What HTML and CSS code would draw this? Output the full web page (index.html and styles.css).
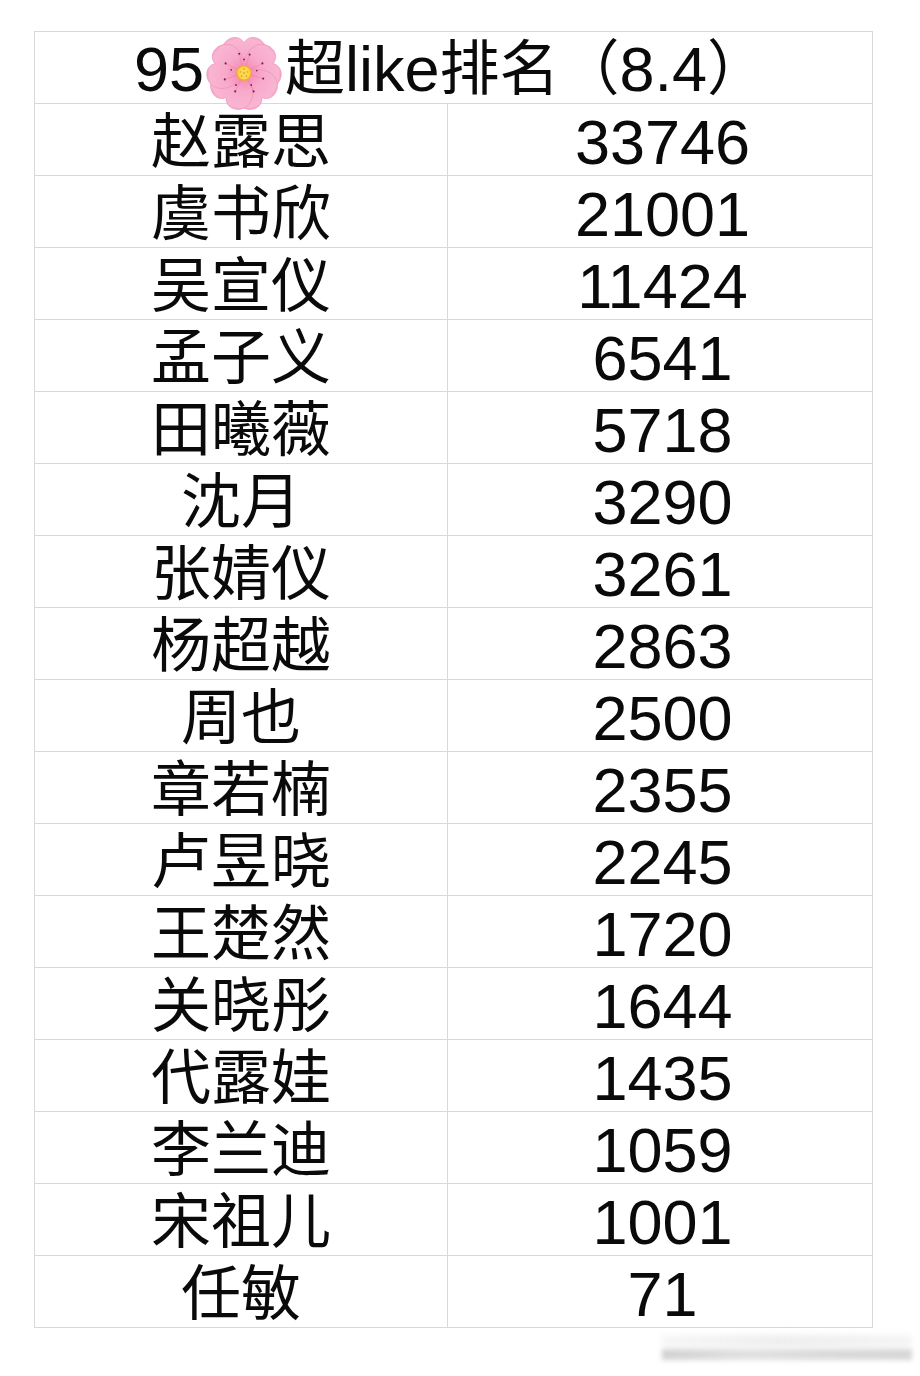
FILE: index.html
```html
<!DOCTYPE html>
<html lang="zh">
<head>
<meta charset="utf-8">
<title>95超like排名</title>
<link rel="stylesheet" href="styles.css">
</head>
<body>
<div class="sheet">
  <div class="grid">
    <div class="cell title"><span class="lat">95</span><svg class="blossom" viewBox="0 0 100 100" aria-hidden="true">
        <defs>
          <radialGradient id="pg" cx="50" cy="50" r="50" gradientUnits="userSpaceOnUse">
            <stop offset="0" stop-color="#f27fb0"/>
            <stop offset="0.45" stop-color="#f8a9ca"/>
            <stop offset="0.85" stop-color="#f9b5d2"/>
            <stop offset="1" stop-color="#f399c2"/>
          </radialGradient>
          <path id="petal" d="M50,51 C29,46 17,29 24,15 C30,4 44,2 50,12 C56,2 70,4 76,15 C83,29 71,46 50,51 Z"/>
        </defs>
        <g fill="url(#pg)" stroke="#ee8fbb" stroke-width="0.8">
          <use href="#petal"/>
          <use href="#petal" transform="rotate(72 50 50)"/>
          <use href="#petal" transform="rotate(144 50 50)"/>
          <use href="#petal" transform="rotate(216 50 50)"/>
          <use href="#petal" transform="rotate(288 50 50)"/>
        </g>
        <g stroke="#d9609a" stroke-width="0.7" opacity="0.5">
          <line x1="50" y1="50" x2="44" y2="26"/><line x1="50" y1="50" x2="57" y2="27"/>
          <line x1="50" y1="50" x2="73" y2="38"/><line x1="50" y1="50" x2="74" y2="57"/>
          <line x1="50" y1="50" x2="62" y2="73"/><line x1="50" y1="50" x2="39" y2="73"/>
          <line x1="50" y1="50" x2="26" y2="58"/><line x1="50" y1="50" x2="27" y2="38"/>
        </g>
        <g fill="#7d1d48">
          <circle cx="44" cy="26" r="1.3"/><circle cx="57" cy="27" r="1.3"/>
          <circle cx="73" cy="38" r="1.3"/><circle cx="74" cy="57" r="1.3"/>
          <circle cx="62" cy="73" r="1.3"/><circle cx="39" cy="73" r="1.3"/>
          <circle cx="26" cy="58" r="1.3"/><circle cx="27" cy="38" r="1.3"/>
          <circle cx="50" cy="33" r="1.1"/><circle cx="66" cy="47" r="1.1"/>
          <circle cx="59" cy="65" r="1.1"/><circle cx="40" cy="65" r="1.1"/>
          <circle cx="34" cy="46" r="1.1"/>
        </g>
        <circle cx="50" cy="50" r="10" fill="#f5a63c"/>
        <circle cx="50" cy="50" r="8" fill="#fbd94c"/>
        <g fill="#f39c2c">
          <circle cx="50" cy="45" r="1.1"/><circle cx="54.5" cy="48.5" r="1.1"/><circle cx="53" cy="54" r="1.1"/>
          <circle cx="47" cy="54" r="1.1"/><circle cx="45.5" cy="48.5" r="1.1"/><circle cx="50" cy="50" r="1.1"/>
        </g>
      </svg>超<span class="lat">like</span>排名（<span class="lat">8.4</span>）</div>

    <div class="cell name">赵露思</div><div class="cell num">33746</div>
    <div class="cell name">虞书欣</div><div class="cell num">21001</div>
    <div class="cell name">吴宣仪</div><div class="cell num">11424</div>
    <div class="cell name">孟子义</div><div class="cell num">6541</div>
    <div class="cell name">田曦薇</div><div class="cell num">5718</div>
    <div class="cell name">沈月</div><div class="cell num">3290</div>
    <div class="cell name">张婧仪</div><div class="cell num">3261</div>
    <div class="cell name">杨超越</div><div class="cell num">2863</div>
    <div class="cell name">周也</div><div class="cell num">2500</div>
    <div class="cell name">章若楠</div><div class="cell num">2355</div>
    <div class="cell name">卢昱晓</div><div class="cell num">2245</div>
    <div class="cell name">王楚然</div><div class="cell num">1720</div>
    <div class="cell name">关晓彤</div><div class="cell num">1644</div>
    <div class="cell name">代露娃</div><div class="cell num">1435</div>
    <div class="cell name">李兰迪</div><div class="cell num">1059</div>
    <div class="cell name">宋祖儿</div><div class="cell num">1001</div>
    <div class="cell name">任敏</div><div class="cell num">71</div>
  </div>
  <div class="footer">
    <div class="watermark">
      <div class="wm-top"></div>
      <div class="wm-band"></div>
    </div>
  </div>
</div>
</body>
</html>
```

FILE: styles.css
```css
html, body {
  margin: 0;
  padding: 0;
  background: #ffffff;
}

body {
  width: 920px;
  height: 1376px;
  overflow: hidden;
  font-family: "Liberation Sans", "Noto Sans CJK SC", sans-serif;
  color: #0a0a0a;
}

.sheet {
  padding: 31px 0 0 34px;
}

.grid {
  display: grid;
  grid-template-columns: 413px 425px;
  width: 838px;
  border-top: 1px solid #d8d8d8;
  border-left: 1px solid #d8d8d8;
}

.cell {
  height: 72px;
  box-sizing: border-box;
  border-right: 1px solid #d8d8d8;
  border-bottom: 1px solid #d8d8d8;
  display: flex;
  align-items: center;
  justify-content: center;
  white-space: nowrap;
  line-height: 1;
}

.title {
  grid-column: 1 / span 2;
  font-size: 60px;
  padding-top: 4px;
  padding-right: 6px;
}

.title .lat {
  font-size: 63px;
}

.blossom {
  width: 80px;
  height: 80px;
  margin: 6px 1px 0 0;
  flex: none;
}

.name {
  font-size: 60px;
  padding-top: 7px;
}

.num {
  font-size: 63px;
  padding-top: 6px;
  padding-left: 5px;
}

.footer {
  display: flex;
  justify-content: flex-end;
  padding: 7px 8px 0 0;
}

.watermark {
  width: 250px;
  display: flex;
  flex-direction: column;
  gap: 2px;
}

.wm-top {
  height: 12px;
  background: linear-gradient(90deg, rgba(225,225,225,0.3), rgba(220,220,220,0.5) 50%, rgba(225,225,225,0.35));
  filter: blur(3px);
}

.wm-band {
  height: 11px;
  background: linear-gradient(90deg, #cdcdcd, #dedede 35%, #d6d6d6 65%, #d2d2d2);
  filter: blur(2.5px);
  opacity: 0.9;
}
```
